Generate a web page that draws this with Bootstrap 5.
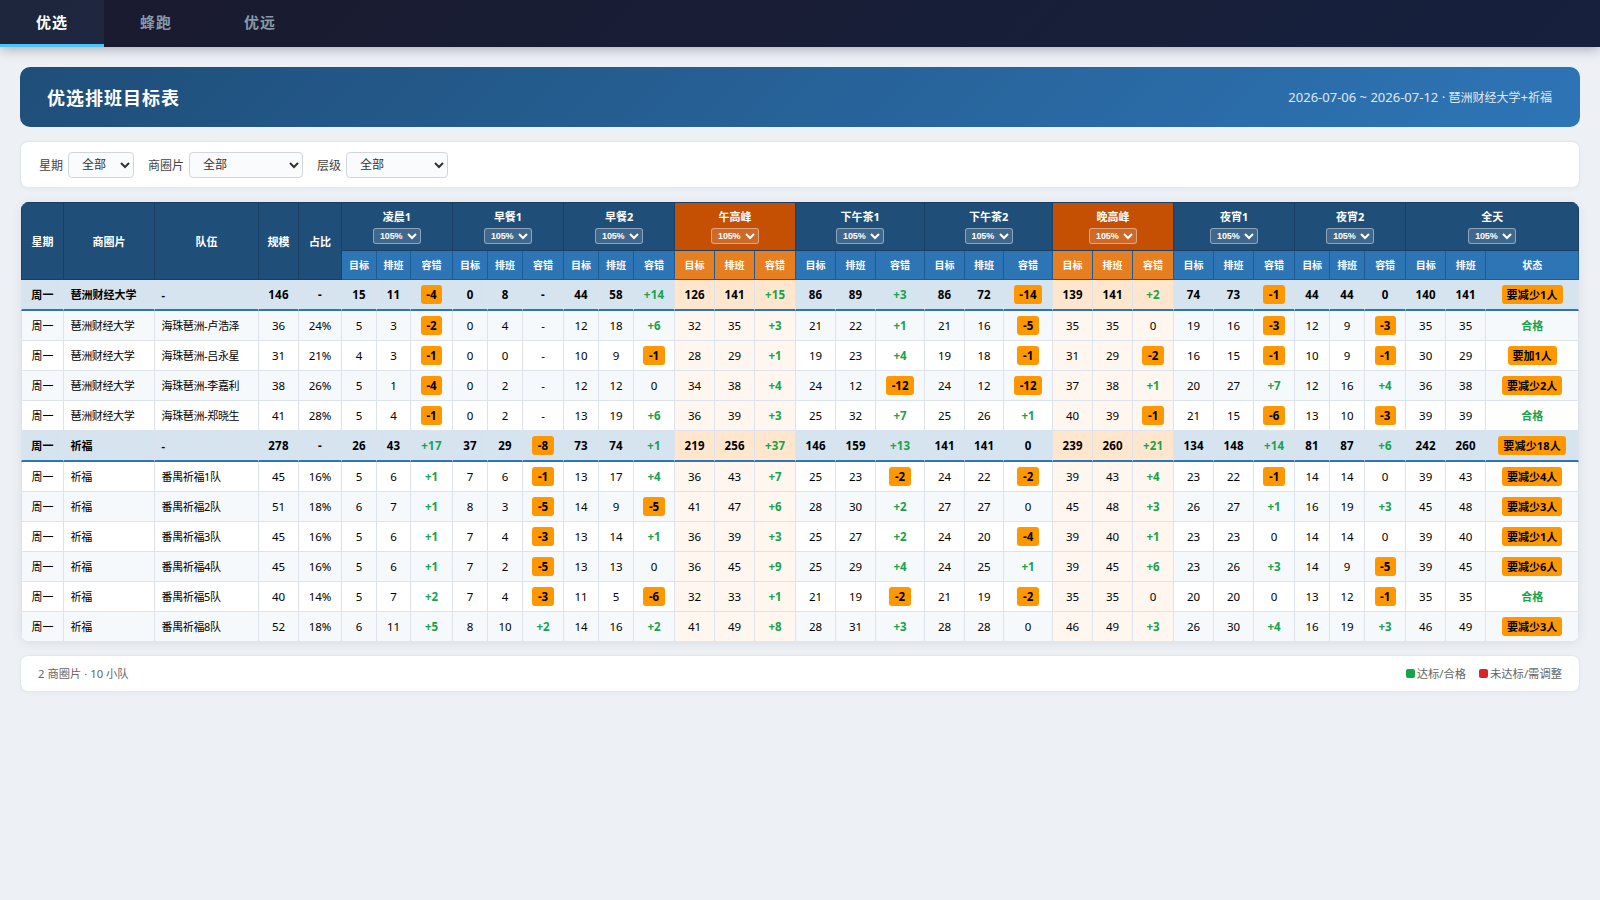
<!DOCTYPE html>
<html lang="zh-CN">
<head>
<meta charset="utf-8">
<meta name="viewport" content="width=device-width, initial-scale=1">
<title>优选排班目标表</title>
<link href="https://cdn.jsdelivr.net/npm/bootstrap@5.3.0/dist/css/bootstrap.min.css" rel="stylesheet">
<style>
body{background:#edf1f6;font-family:"Noto Sans","Noto Sans CJK SC",sans-serif;font-size:12px;line-height:1.5;color:#000;min-height:100vh}
.topbar{height:47px;background:linear-gradient(135deg,#1a1a2e,#16213e);box-shadow:0 2px 12px rgba(0,0,0,.3)}
.topbar .nav-link{width:104px;height:47px;padding:0;border:0;border-bottom:3px solid transparent;border-radius:0;color:#8899aa;font-size:15px;font-weight:700;letter-spacing:1px;line-height:44px;text-align:center}
.topbar .nav-link.active{color:#fff;background:rgba(79,195,247,.08);border-bottom-color:#4fc3f7}
.page{padding:20px 20px 0;gap:14px}
.hero{height:60px;padding:2px 28px 0 27px;border-radius:10px;background:linear-gradient(135deg,#1f4e79,#2e75b6);color:#fff}
.hero h1{font-size:18px;font-weight:700;letter-spacing:1px;line-height:1}
.hero .period{font-size:13px;opacity:.85}
.zh12{font-size:12px}
.panel{background:#fff;border:1px solid #e2e8f0;border-radius:8px}
.filters{height:47px;padding:0 18px;gap:14px;box-shadow:0 1px 4px rgba(0,0,0,.04)}
.filters label{color:#444;gap:5px}
.filters label span{padding-top:2px}
.filters select{height:26px;border:1px solid #d0d5e0;border-radius:4px;background:#fafbfd;color:#333;font-size:12px;padding:0 0 0 9px}
.sheet-wrap{width:1558px;height:439px;margin-left:1px;border-radius:8px;overflow:hidden;box-shadow:0 2px 12px rgba(0,0,0,.08);background:#fff}
.sheet{table-layout:fixed;width:1558px;border-collapse:separate;border-spacing:0;font-size:11.5px;line-height:17px}
.sheet th,.sheet td{padding:0;text-align:center;vertical-align:middle;white-space:nowrap;border:0 solid #dde3ec;border-width:0 1px 1px 0}
.sheet th:first-child,.sheet td:first-child{border-left-width:1px}
.sheet thead th{background:#1f4e79;color:#fff;font-weight:700;font-size:11px;border-color:#1a3f63}
.sheet thead tr:first-child th{border-top-width:1px}
.sheet thead tr:first-child{height:49px}
.sheet thead tr:last-child{height:29px}
.sheet thead tr:last-child th{background:#2e75b6;font-size:10px;border-color:#1f5c96;border-left-width:0}
.sheet thead tr:first-child th.peak{background:#c55004}
.sheet thead tr:last-child th.peak{background:#e67e22}
.sheet thead .cap{display:block;line-height:16px}
.sheet th select{display:block;width:48px;height:16px;margin:3px auto 0;padding:0 0 0 2px;border:1px solid rgba(255,255,255,.4);border-radius:3px;background:rgba(255,255,255,.15);color:#fff;font:700 9px "Liberation Sans",sans-serif;letter-spacing:-.15px}
.sheet tbody tr{height:30px}
.sheet tbody tr:nth-child(even) td{background:#f5f9fc}
.sheet tbody td.peak,.sheet tbody tr:nth-child(even) td.peak{background:#fff7ef}
.sheet tbody tr.sum{height:31px;font-weight:700}
.sheet tbody tr.sum td{background:#d6e4f0;border-bottom:2px solid #2e75b6;letter-spacing:.2px}
.sheet tbody tr.sum td.peak{background:#ffe6cc}
.sheet tbody td.name,.sheet tbody tr.sum td.name{text-align:left;padding-left:6.5px;font-size:11px;letter-spacing:-.35px}
.sheet tbody tr.sum td.name{letter-spacing:0}
.sheet td.day{font-size:11px}
.up{color:#16a34a;font-weight:700}
.flag{display:inline-block;height:19px;line-height:19px;padding:0 5px;border-radius:3px;background:#ff9800;color:#000;font-weight:700;vertical-align:middle}
.flag:not(.state){padding:0 5.5px}
.state{font-size:11px}
.foot{height:37px;padding:2px 17px 0;color:#666;font-size:11.3px;box-shadow:0 1px 4px rgba(0,0,0,.03)}
.dot{display:inline-block;width:9px;height:9px;border-radius:2px;margin-right:2px}
</style>
</head>
<body>
<nav class="topbar nav">
  <a class="nav-link active" href="#">优选</a>
  <a class="nav-link" href="#">蜂跑</a>
  <a class="nav-link" href="#">优远</a>
</nav>
<main class="page d-flex flex-column">
  <header class="hero d-flex align-items-center justify-content-between">
    <h1 class="m-0">优选排班目标表</h1>
    <div class="period">2026-07-06 ~ 2026-07-12 · <span class="zh12">琶洲财经大学</span>+<span class="zh12">祈福</span></div>
  </header>
  <section class="panel filters d-flex align-items-center">
    <label class="d-flex align-items-center"><span>星期</span> <select style="width:66px"><option>全部</option></select></label>
    <label class="d-flex align-items-center"><span>商圈片</span> <select style="width:114px"><option>全部</option></select></label>
    <label class="d-flex align-items-center"><span>层级</span> <select style="width:102px"><option>全部</option></select></label>
  </section>
  <section class="sheet-wrap">
    <table class="sheet">
      <colgroup id="cols"></colgroup>
      <thead id="head"></thead>
      <tbody id="rows"></tbody>
    </table>
  </section>
  <footer class="panel foot d-flex align-items-center justify-content-between">
    <span>2 商圈片 · 10 小队</span>
    <span class="d-flex" style="gap:13px"><span><i class="dot" style="background:#16a34a"></i>达标/合格</span><span><i class="dot" style="background:#dc2626"></i>未达标/需调整</span></span>
  </footer>
</main>
<script src="https://cdn.jsdelivr.net/npm/bootstrap@5.3.0/dist/js/bootstrap.bundle.min.js"></script>
<script>
const widths=[43,91,104,40,43,35,34,42,35,35,41,35,35,41,40,40,41,40,40,49,40,39,49,40,40,41,40,40,41,35,35,41,40,40,93];
const periods=['凌晨1','早餐1','早餐2','午高峰','下午茶1','下午茶2','晚高峰','夜宵1','夜宵2','全天'];
const isPeak=i=>i===3||i===6;
// day | area | team | size | share | target,actual,diff per period ... | target,actual,state
const data=[
'周一|琶洲财经大学|-|146|-|15,11,-4|0,8,-|44,58,+14|126,141,+15|86,89,+3|86,72,-14|139,141,+2|74,73,-1|44,44,0|140,141,要减少1人',
'周一|琶洲财经大学|海珠琶洲-卢浩泽|36|24%|5,3,-2|0,4,-|12,18,+6|32,35,+3|21,22,+1|21,16,-5|35,35,0|19,16,-3|12,9,-3|35,35,合格',
'周一|琶洲财经大学|海珠琶洲-吕永星|31|21%|4,3,-1|0,0,-|10,9,-1|28,29,+1|19,23,+4|19,18,-1|31,29,-2|16,15,-1|10,9,-1|30,29,要加1人',
'周一|琶洲财经大学|海珠琶洲-李嘉利|38|26%|5,1,-4|0,2,-|12,12,0|34,38,+4|24,12,-12|24,12,-12|37,38,+1|20,27,+7|12,16,+4|36,38,要减少2人',
'周一|琶洲财经大学|海珠琶洲-郑晓生|41|28%|5,4,-1|0,2,-|13,19,+6|36,39,+3|25,32,+7|25,26,+1|40,39,-1|21,15,-6|13,10,-3|39,39,合格',
'周一|祈福|-|278|-|26,43,+17|37,29,-8|73,74,+1|219,256,+37|146,159,+13|141,141,0|239,260,+21|134,148,+14|81,87,+6|242,260,要减少18人',
'周一|祈福|番禺祈福1队|45|16%|5,6,+1|7,6,-1|13,17,+4|36,43,+7|25,23,-2|24,22,-2|39,43,+4|23,22,-1|14,14,0|39,43,要减少4人',
'周一|祈福|番禺祈福2队|51|18%|6,7,+1|8,3,-5|14,9,-5|41,47,+6|28,30,+2|27,27,0|45,48,+3|26,27,+1|16,19,+3|45,48,要减少3人',
'周一|祈福|番禺祈福3队|45|16%|5,6,+1|7,4,-3|13,14,+1|36,39,+3|25,27,+2|24,20,-4|39,40,+1|23,23,0|14,14,0|39,40,要减少1人',
'周一|祈福|番禺祈福4队|45|16%|5,6,+1|7,2,-5|13,13,0|36,45,+9|25,29,+4|24,25,+1|39,45,+6|23,26,+3|14,9,-5|39,45,要减少6人',
'周一|祈福|番禺祈福5队|40|14%|5,7,+2|7,4,-3|11,5,-6|32,33,+1|21,19,-2|21,19,-2|35,35,0|20,20,0|13,12,-1|35,35,合格',
'周一|祈福|番禺祈福8队|52|18%|6,11,+5|8,10,+2|14,16,+2|41,49,+8|28,31,+3|28,28,0|46,49,+3|26,30,+4|16,19,+3|46,49,要减少3人'];
document.getElementById('cols').innerHTML=widths.map(w=>`<col style="width:${w}px">`).join('');
document.getElementById('head').innerHTML='<tr>'+['星期','商圈片','队伍','规模','占比'].map(t=>`<th rowspan="2">${t}</th>`).join('')
 +periods.map((p,i)=>`<th colspan="3"${isPeak(i)?' class="peak"':''}><span class="cap">${p}</span><select><option>105%</option></select></th>`).join('')+'</tr><tr>'
 +periods.map((p,i)=>['目标','排班',i===9?'状态':'容错'].map(t=>`<th${isPeak(i)?' class="peak"':''}>${t}</th>`).join('')).join('')+'</tr>';
const mark=v=>v==='合格'?`<span class="up state">${v}</span>`:v[0]==='要'?`<span class="flag state">${v}</span>`
 :v[0]==='+'?`<span class="up">${v}</span>`:/^-\d/.test(v)?`<span class="flag">${v}</span>`:v;
document.getElementById('rows').innerHTML=data.map(r=>{
 const f=r.split('|');
 return `<tr${f[2]==='-'?' class="sum"':''}><td class="day">${f[0]}</td><td class="name">${f[1]}</td><td class="name">${f[2]}</td><td>${f[3]}</td><td>${f[4]}</td>`
 +f.slice(5).map((g,i)=>g.split(',').map((v,k)=>`<td${isPeak(i)?' class="peak"':''}>${k===2?mark(v):v}</td>`).join('')).join('')+'</tr>';
}).join('');
</script>
</body>
</html>
